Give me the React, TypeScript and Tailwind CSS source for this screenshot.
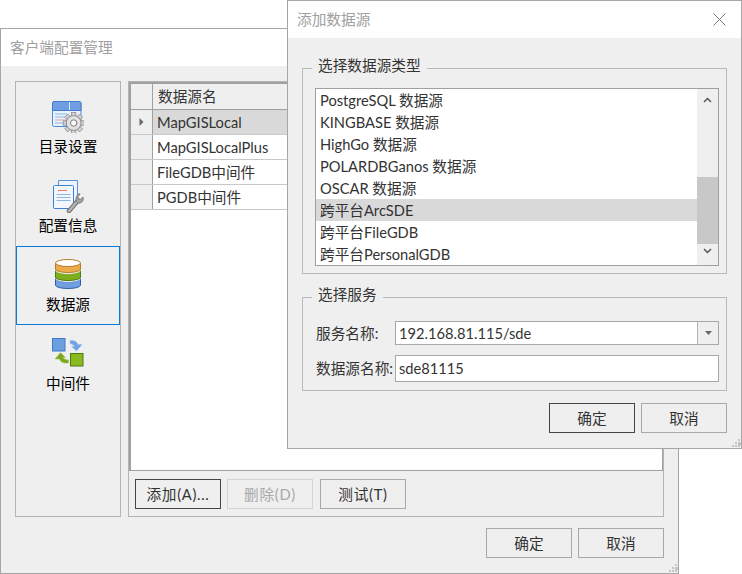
const font = "[font-family:'Lato','Noto_Sans_CJK_SC',sans-serif]";

function Grip() {
  return (
    <svg className="absolute right-0 bottom-0" width="9" height="9" viewBox="0 0 9 9">
      <path d="M6 0h2v2H6zM3 3h2v2H3zM6 3h3v3H6zM0 6h2v2H0zM3 6h2v2H3zM6 6h2v2H6z" fill="#c4c4c4" />
    </svg>
  );
}

function Gear() {
  const teeth = [0, 45, 90, 135, 180, 225, 270, 315];
  return (
    <g>
      {teeth.map((a) => (
        <rect key={a} x="19.5" y="11.5" width="4.4" height="5" fill="#d0d0d0" stroke="#858585" strokeWidth="0.7" transform={`rotate(${a} 21.7 22)`} />
      ))}
      <circle cx="21.7" cy="22" r="7.4" fill="#e2e2e2" stroke="#8a8a8a" />
      <circle cx="21.7" cy="22" r="3.2" fill="#fafafa" stroke="#7a7a7a" />
    </g>
  );
}

function DirIcon() {
  return (
    <svg width="32" height="32" viewBox="0 0 32 32">
      <rect x="0.5" y="0.5" width="28.5" height="25" rx="2" fill="#eaf2fc" stroke="#4f8ad6" />
      <path d="M0.5 9.5V2.5a2 2 0 0 1 2-2H27a2 2 0 0 1 2 2v7z" fill="#6f9fe2" stroke="#3f7ccb" />
      <path d="M17.5 1v8" stroke="#dbe8f8" />
      <path d="M3 13h12M3 16h10" stroke="#8fb4e4" />
      <path d="M3 19h12" stroke="#e0a0a0" />
      <path d="M3 22h11" stroke="#8fb4e4" />
      <Gear />
    </svg>
  );
}

function ConfigIcon() {
  return (
    <svg width="32" height="33" viewBox="0 0 32 33">
      <path d="M6.5 5V0.5H25.5V23H22" fill="#eef4fc" stroke="#5b93da" />
      <rect x="1.5" y="5.5" width="20" height="23" rx="1" fill="#f2f7fd" stroke="#3f7fd2" />
      <path d="M6 10.5h9" stroke="#e07a7a" />
      <path d="M4.500 14.500h14M4.500 17.500h14M4.500 20.500h14" stroke="#8eb4e6" />
      <path d="M17 31l9-10.500" stroke="#6f6f6f" strokeWidth="4.500" strokeLinecap="round" />
      <path d="M17 31l9-10.500" stroke="#b5b5b5" strokeWidth="2.500" strokeLinecap="round" />
      <path d="M24.500 16.500c-1.500 3.500 0 7.500 3.500 6.500 2.500-.6 3.800-3.200 3-6l-2.700 2.600-2-.8-.2-2.300 2-2.600c-1.600-.2-3 .7-3.600 2.600z" fill="#a6a6a6" stroke="#6c6c6c" strokeWidth="0.800" />
    </svg>
  );
}

function DataIcon() {
  return (
    <svg width="26" height="30" viewBox="0 0 26 30">
      <path d="M0.500 20v6c0 2 5.500 3.500 12.500 3.500s12.500-1.500 12.500-3.500v-6z" fill="#6f9fe0" stroke="#2b5fa8" />
      <path d="M0.500 17c0 2.200 5.500 4 12.500 4s12.500-1.800 12.500-4v2.500c0 2.200-5.500 3.800-12.500 3.800S.5 21.700.5 19.500z" fill="#fff" stroke="#3f6fb5" strokeWidth="0.600" />
      <path d="M0.500 12v6c0 2 5.500 3.500 12.500 3.500s12.500-1.500 12.500-3.500v-6z" fill="#7fae1c" stroke="#4f7a10" />
      <path d="M0.500 9c0 2.200 5.500 4 12.500 4s12.500-1.800 12.500-4v2.500c0 2.200-5.500 3.800-12.500 3.800S.5 13.700.5 11.500z" fill="#fff" stroke="#6f9420" strokeWidth="0.600" />
      <path d="M0.500 4v6c0 2 5.500 3.500 12.500 3.500s12.500-1.500 12.500-3.500v-6z" fill="#eeaa48" stroke="#b47c2c" />
      <ellipse cx="13" cy="4" rx="12.500" ry="3.500" fill="#fff" stroke="#b47c2c" />
    </svg>
  );
}

function MiddleIcon() {
  return (
    <svg width="32" height="29" viewBox="0 0 32 29">
      <rect x="0.500" y="0.500" width="12.500" height="12.500" fill="#6b9fe0" stroke="#3c79c8" />
      <rect x="18.500" y="15.500" width="12.500" height="12.500" fill="#8aba1e" stroke="#4d7a12" />
      <path d="M18 2.500c4 -.5 7 1 8 4h4l-5.500 6.500-5-4.500h3c-.5-1.500-2.500-2.500-4.500-3z" fill="#6fa3e4" stroke="#9cc0ee" strokeWidth="0.600" />
      <path d="M16.500 25c-4 .5-8-.5-9-4H3l5.500-6.500 5 5h-2.500c.5 1.500 3 2.500 5.500 2.500z" fill="#79a81c" stroke="#a6c860" strokeWidth="0.600" />
    </svg>
  );
}

function NavItem({ icon, label, active }: { icon: React.ReactNode; label: string; active?: boolean }) {
  return (
    <div className={`h-[79px] flex flex-col items-center pt-[12px] border ${active ? "border-[#0a7ad9]" : "border-transparent"}`}>
      <div className="h-[33px] flex items-start justify-center">{icon}</div>
      <div className="mt-[2px] text-black leading-[22px]">{label}</div>
    </div>
  );
}

function Btn({ children, primary, disabled, w = "w-[86px]" }: { children: React.ReactNode; primary?: boolean; disabled?: boolean; w?: string }) {
  const tone = primary ? "border-[#444444] text-[#333333]" : disabled ? "border-[#d4d4d4] text-[#a8a8a8]" : "border-[#a8a8a8] text-[#333333]";
  return <div className={`${w} h-[30px] shrink-0 border pt-[2px] flex items-center justify-center ${tone}`}>{children}</div>;
}

const rows = ["MapGISLocal", "MapGISLocalPlus", "FileGDB中间件", "PGDB中间件"];
const types = ["PostgreSQL 数据源", "KINGBASE 数据源", "HighGo 数据源", "POLARDBGanos 数据源", "OSCAR 数据源", "跨平台ArcSDE", "跨平台FileGDB", "跨平台PersonalGDB"];

export default function App() {
  return (
    <div className={`relative w-[742px] h-[574px] bg-white overflow-hidden text-[14.67px] leading-[22px] text-[#333333] ${font}`}>
      {/* main window */}
      <div className="absolute left-0 top-[28px] w-[679px] h-[546px] border border-[#a6a6a6] bg-[#efefef] flex flex-col">
        <div className="h-[37px] shrink-0 bg-white flex items-center pl-[9px] text-[#a0a0a0]">客户端配置管理</div>
        <div className="flex gap-[7px] pl-[14px] pt-[15px]">
          <div className="w-[106px] h-[436px] border border-[#b4b4b4] pt-[6px]">
            <NavItem icon={<DirIcon />} label="目录设置" />
            <NavItem icon={<ConfigIcon />} label="配置信息" />
            <NavItem icon={<DataIcon />} label="数据源" active />
            <NavItem icon={<MiddleIcon />} label="中间件" />
          </div>
          <div className="w-[536px] h-[436px] border border-[#b4b4b4] flex flex-col">
            <div className="h-[389px] shrink-0 bg-white border-2 border-[#a0a0a0] border-b-1 border-r-1">
              <div className="flex h-[26px] bg-[#efefef] border-b border-[#a0a0a0]">
                <div className="w-[22px] shrink-0 border-r border-[#a0a0a0]" />
                <div className="pl-[5px] flex items-center">数据源名</div>
              </div>
              {rows.map((r, i) => (
                <div key={r} className="flex h-[25px] border-b border-[#c8c8c8]">
                  <div className="w-[22px] shrink-0 border-r border-[#a0a0a0] bg-[#efefef] flex items-center justify-center">
                    {i === 0 && (
                      <svg width="5" height="8" viewBox="0 0 5 8">
                        <path d="M0.500 0l4 4-4 4z" fill="#666666" />
                      </svg>
                    )}
                  </div>
                  <div className={`flex-1 pl-[4px] pt-[2px] flex items-center ${i === 0 ? "bg-[#d9d9d9]" : "bg-white"}`}>{r}</div>
                </div>
              ))}
            </div>
            <div className="flex pl-[6px] pt-[8px] tracking-[0.7px]">
              <Btn primary>添加(A)...</Btn>
              <div className="w-[6px]" />
              <Btn disabled>删除(D)</Btn>
              <div className="w-[7px]" />
              <Btn>测试(T)</Btn>
            </div>
          </div>
        </div>
        <div className="flex justify-end gap-[6px] pr-[14px] pt-[11px]">
          <Btn>确定</Btn>
          <Btn>取消</Btn>
        </div>
        <Grip />
      </div>

      {/* dialog */}
      <div className="absolute left-[287px] top-0 w-[455px] h-[449px] border border-[#a6a6a6] bg-[#efefef] flex flex-col">
        <div className="h-[37px] shrink-0 bg-white flex items-center justify-between pl-[9px] pr-[15px] text-[#a0a0a0]">
          <span>添加数据源</span>
          <svg width="13" height="13" viewBox="0 0 13 13">
            <path d="M0.500 0.500l12 12M12.500 0.500l-12 12" stroke="#7a7a7a" fill="none" />
          </svg>
        </div>
        <div className="px-[14px] pt-[19px]">
          <fieldset className="h-[217px] border border-[#b8b8b8] pl-[12px] pr-[7px]">
            <legend className="-ml-[3px] px-[6px] leading-[22px] -translate-y-[2px]">选择数据源类型</legend>
            <div className="mt-[9px] h-[178px] border border-[#a0a0a0] bg-white flex">
              <div className="flex-1 min-w-0">
                {types.map((t, i) => (
                  <div key={t} className={`h-[22px] pl-[4px] pt-[2px] flex items-center ${i === 5 ? "bg-[#d9d9d9]" : ""}`}>{t}</div>
                ))}
              </div>
              <div className="w-[21px] bg-[#efefef] flex flex-col items-center">
                <svg className="mt-[8px]" width="9" height="6" viewBox="0 0 9 6">
                  <path d="M1 5l3.500-3.500L8 5" stroke="#555555" strokeWidth="1.500" fill="none" />
                </svg>
                <div className="mt-[74px] w-full h-[67px] bg-[#c8c8c8]" />
                <svg className="mt-[4px]" width="9" height="6" viewBox="0 0 9 6">
                  <path d="M1 1l3.500 3.500L8 1" stroke="#555555" strokeWidth="1.500" fill="none" />
                </svg>
              </div>
            </div>
          </fieldset>
          <fieldset className="mt-[12px] h-[105px] border border-[#b8b8b8] pl-[13px] pr-[7px]">
            <legend className="-ml-[4px] px-[6px] leading-[22px] -translate-y-[2px]">选择服务</legend>
            <div className="mt-[13px] flex items-center">
              <div className="w-[79px] shrink-0 pt-[2px]">服务名称:</div>
              <div className="flex-1 h-[24px] border border-[#a8a8a8] bg-white flex">
                <div className="flex-1 pl-[3px] pt-[1px] flex items-center">192.168.81.115/sde</div>
                <div className="w-[21px] bg-[#efefef] border-l border-[#b4b4b4] flex items-center justify-center">
                  <svg width="7" height="4" viewBox="0 0 7 4">
                    <path d="M0 0h7L3.500 4z" fill="#666666" />
                  </svg>
                </div>
              </div>
            </div>
            <div className="mt-[10px] flex items-center">
              <div className="w-[79px] shrink-0 whitespace-nowrap">数据源名称:</div>
              <div className="flex-1 h-[27px] border border-[#a8a8a8] bg-white pl-[3px] flex items-center">sde81115</div>
            </div>
          </fieldset>
          <div className="flex justify-end gap-[6px] pt-[12px]">
            <Btn primary>确定</Btn>
            <Btn>取消</Btn>
          </div>
        </div>
        <Grip />
      </div>
    </div>
  );
}
